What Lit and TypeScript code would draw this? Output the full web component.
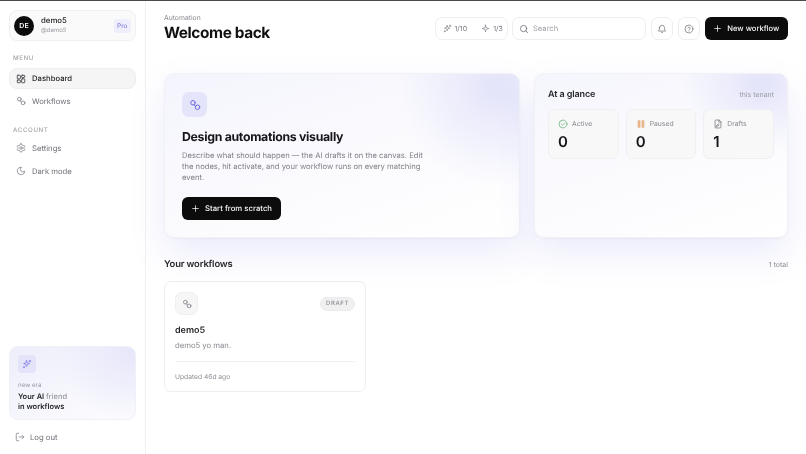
import { LitElement, html, css, svg } from "lit";
import { customElement } from "lit/decorators.js";

const ic = (body: unknown, size = 10, color = "currentColor", sw = 1.9) => html`<svg width=${size} height=${size} viewBox="0 0 24 24" fill="none" stroke=${color} stroke-width=${sw} stroke-linecap="round" stroke-linejoin="round">${body}</svg>`;

const route = svg`<circle cx="8" cy="7.5" r="4.5"/><circle cx="17" cy="16.5" r="4.5"/><path d="M10 11.5l3 3"/>`;
const grid = svg`<rect x="3" y="3" width="7.5" height="8.5" rx="1.5"/><rect x="13.5" y="3" width="7.5" height="5.5" rx="1.5"/><rect x="13.5" y="11.5" width="7.5" height="9.5" rx="1.5"/><rect x="3" y="14.5" width="7.5" height="6.5" rx="1.5"/>`;
const gear = svg`<path d="M12.22 2h-.44a2 2 0 0 0-2 2v.18a2 2 0 0 1-1 1.73l-.43.25a2 2 0 0 1-2 0l-.15-.08a2 2 0 0 0-2.73.73l-.22.38a2 2 0 0 0 .73 2.73l.15.1a2 2 0 0 1 1 1.72v.51a2 2 0 0 1-1 1.74l-.15.09a2 2 0 0 0-.73 2.73l.22.38a2 2 0 0 0 2.73.73l.15-.08a2 2 0 0 1 2 0l.43.25a2 2 0 0 1 1 1.73V20a2 2 0 0 0 2 2h.44a2 2 0 0 0 2-2v-.18a2 2 0 0 1 1-1.73l.43-.25a2 2 0 0 1 2 0l.15.08a2 2 0 0 0 2.73-.73l.22-.39a2 2 0 0 0-.73-2.73l-.15-.08a2 2 0 0 1-1-1.74v-.5a2 2 0 0 1 1-1.74l.15-.09a2 2 0 0 0 .73-2.73l-.22-.38a2 2 0 0 0-2.73-.73l-.15.08a2 2 0 0 1-2 0l-.43-.25a2 2 0 0 1-1-1.73V4a2 2 0 0 0-2-2z"/><circle cx="12" cy="12" r="3"/>`;
const moon = svg`<path d="M12 3a6 6 0 0 0 9 9 9 9 0 1 1-9-9Z"/>`;
const sparkle = svg`<path d="M11 4l1.8 5.2L18 11l-5.2 1.8L11 18l-1.8-5.2L4 11l5.2-1.8z"/><path d="M19 3v4M17 5h4M5 18v3M3.5 19.5h3"/>`;
const bolt = svg`<path d="M12 3l2 7 7 2-7 2-2 7-2-7-7-2 7-2z"/>`;
const logout = svg`<path d="M9 3H5a2 2 0 0 0-2 2v14a2 2 0 0 0 2 2h4"/><path d="M10 12h11M17 8l4 4-4 4"/>`;
const search = svg`<circle cx="11" cy="11" r="7.5"/><path d="M21 21l-4.5-4.5"/>`;
const bell = svg`<path d="M6 9a6 6 0 0 1 12 0c0 6 2.5 8 2.5 8h-17S6 15 6 9z"/><path d="M10.5 20.5a2 2 0 0 0 3 0"/>`;
const help = svg`<circle cx="12" cy="12" r="9.5"/><path d="M9.2 9.2a3 3 0 0 1 5.7 1c0 2-2.9 2.6-2.9 3.6"/><path d="M12 17.2h.01"/>`;
const plus = svg`<path d="M12 4.5v15M4.5 12h15"/>`;
const check = svg`<circle cx="12" cy="12" r="9.5"/><path d="M8 12.2l2.8 2.8L16 9.5"/>`;
const pause = svg`<rect x="4" y="3" width="6.6" height="18" rx="1.2" fill="#e8b48a" stroke="none"/><rect x="13.4" y="3" width="6.6" height="18" rx="1.2" fill="#e8b48a" stroke="none"/>`;
const draft = svg`<path d="M14 2.5H7a2 2 0 0 0-2 2v15a2 2 0 0 0 2 2h10a2 2 0 0 0 2-2V7.5z"/><path d="M14 2.5v5h5"/><path d="M8 18l1-3 4-3 2 2-4 3z"/>`;

@customElement("app-root")
export class AppRoot extends LitElement {
  static styles = css`
    :host { display: block; width: 806px; height: 454px; overflow: hidden; background: #fff; font-family: Inter, "Liberation Sans", sans-serif; color: #111113; text-rendering: geometricPrecision; will-change: transform; }
    * { box-sizing: border-box; }
    .shell { display: flex; height: 454px; border-top: 1px solid #4a4a4c; }
    .side { width: 146px; flex: none; border-right: 1px solid #f1f1f3; padding: 9px 9px 0; display: flex; flex-direction: column; }
    .user { height: 31px; border: 1px solid #f0f0f2; border-radius: 8px; background: #fafafa; display: flex; align-items: center; padding: 0 4px; gap: 7px; box-shadow: 0 1px 2px rgba(0,0,0,.02); }
    .avatar { width: 20px; height: 20px; border-radius: 50%; background: #0c0c0d; color: #fff; font-size: 7px; font-weight: 600; display: flex; align-items: center; justify-content: center; }
    .who { flex: 1; line-height: 1; }
    .who b { display: block; font-size: 7.8px; font-weight: 500; color: #26262a; margin-bottom: 3px; }
    .who span { display: block; font-size: 6px; color: #9a9aa2; }
    .pro { font-size: 6.5px; color: #8b86e0; background: #eeeefc; border-radius: 3px; padding: 3px 3.5px; font-weight: 500; }
    .label { font-size: 6.2px; letter-spacing: .6px; color: #a3a3aa; font-weight: 500; line-height: 8px; padding-left: 4px; }
    .label.m { margin-top: 14px; margin-bottom: 5px; }
    .label.a { margin-top: 13.5px; margin-bottom: 2.5px; }
    .nav { height: 22px; display: flex; align-items: center; gap: 6px; padding-left: 7px; font-size: 7.7px; color: #6f6f77; border-radius: 8px; margin-bottom: 1px; }
    .nav.on { height: 21px; background: #f5f5f6; border: 1px solid #eeeef0; color: #26262a; font-weight: 500; padding-left: 6px; }
    .spacer { flex: 1; }
    .promo { height: 74px; border: 1px solid #f0f0f7; border-radius: 9px; padding: 8px; background: radial-gradient(circle at 100% 0, #e6e6fa 0, rgba(230,230,250,0) 55%), linear-gradient(150deg,#eeeefb 0,#f7f7fd 60%,#fdfdff 100%); }
    .promo-ic { width: 18px; height: 18px; border-radius: 4px; background: #e3e3fa; display: flex; align-items: center; justify-content: center; color: #6d6ae0; margin-bottom: 9px; }
    .era { font-size: 6.2px; color: #9a9aa2; line-height: 8px; margin-bottom: 2px; }
    .promo p { margin: 0; font-size: 7.5px; line-height: 10px; font-weight: 600; color: #26262a; }
    .promo p i { font-style: normal; font-weight: 400; color: #88888f; }
    .logout { height: 34px; display: flex; align-items: center; gap: 5px; padding-left: 6px; font-size: 7.7px; color: #6f6f77; }
    .main { flex: 1; padding: 10px 18px 0 18px; min-width: 0; background: #fff; position: relative; }
    .top { display: flex; align-items: flex-start; height: 36px; }
    .crumb { font-size: 6.8px; color: #8a8a92; line-height: 9px; margin-top: 2px; }
    h1 { margin: 0; font-size: 15.4px; line-height: 20px; font-weight: 700; letter-spacing: -.4px; margin-top: 1px; color: #111113; }
    .tools { margin-left: auto; display: flex; align-items: center; gap: 4.5px; margin-top: 6px; }
    .usage { width: 73px; height: 23px; border: 1px solid #f0f0f2; border-radius: 7px; display: flex; align-items: center; font-size: 7px; color: #77777f; padding: 0 7px; }
    .usage span { display: inline-flex; align-items: center; gap: 3px; }
    .usage em { width: 1px; height: 7px; background: #eeeeef; margin: 0 7px; }
    .search { width: 134px; height: 23px; border: 1px solid #eeeef0; border-radius: 7px; display: flex; align-items: center; gap: 4px; padding-left: 6px; font-size: 7.6px; color: #a3a3aa; }
    .square { width: 22.5px; height: 23px; border: 1px solid #eeeef0; border-radius: 7px; display: flex; align-items: center; justify-content: center; color: #66666e; }
    .primary { background: #0c0c0d; color: #f5f5f5; border-radius: 6px; display: inline-flex; align-items: center; justify-content: center; gap: 5px; font-weight: 500; }
    .new { width: 83.5px; height: 23px; font-size: 7.6px; }
    .cards { display: flex; gap: 14px; margin-top: 26px; }
    .card { height: 165px; border: 1px solid #f1f1f6; border-radius: 10px; box-shadow: 0 16px 36px rgba(110,110,230,.14), 0 1px 2px rgba(0,0,0,.03); }
    .hero { width: 356px; padding: 18px 17px; background: radial-gradient(ellipse 100px 100px at 94% 8%, #e3e3fa 0, rgba(228,228,250,.55) 45%, rgba(228,228,250,0) 100%), linear-gradient(160deg,#f4f4fd 0,#fbfbfe 55%,#fff 100%); }
    .hero-ic { width: 25px; height: 25px; border-radius: 7px; background: #e4e4fa; display: flex; align-items: center; justify-content: center; color: #6d6ae0; }
    h2 { margin: 11px 0 0; font-size: 12.3px; line-height: 17px; font-weight: 700; letter-spacing: -.3px; color: #16161a; }
    .hero p { margin: 5px 0 0; width: 245px; font-size: 7.65px; line-height: 11.2px; color: #7f7f87; }
    .start { width: 99px; height: 23px; font-size: 7.75px; margin-top: 13px; }
    .glance { flex: 1; padding: 13px; background: radial-gradient(ellipse 80px 70px at 90% 6%, #e3e3fa 0, rgba(228,228,250,.55) 45%, rgba(228,228,250,0) 100%), linear-gradient(160deg,#f5f5fd 0,#fbfbfe 55%,#fff 100%); }
    .g-head { display: flex; justify-content: space-between; align-items: center; height: 14px; margin-bottom: 8px; }
    .g-head b { font-size: 9px; font-weight: 600; color: #26262a; letter-spacing: -.1px; }
    .g-head span { font-size: 7px; color: #9a9aa2; }
    .stats { display: flex; gap: 7px; }
    .stat { flex: 1; height: 50px; border: 1px solid #f0f0f3; border-radius: 7px; background: #f8f8f9; padding: 8.5px 9px; }
    .stat div { display: flex; align-items: center; gap: 4px; font-size: 6.8px; color: #88888f; line-height: 9px; height: 10px; }
    .stat strong { display: block; margin-top: 4.5px; font-size: 15px; line-height: 18px; font-weight: 600; color: #16161a; }
    .wf-head { display: flex; justify-content: space-between; align-items: center; margin-top: 19px; height: 14px; }
    .wf-head b { font-size: 9.4px; font-weight: 600; letter-spacing: -.15px; color: #26262a; }
    .wf-head span { font-size: 7px; color: #88888f; }
    .wf { width: 202px; height: 111px; border: 1px solid #efeff1; border-radius: 7px; margin-top: 10px; padding: 10px 10px 0; background: #fff; }
    .wf-top { display: flex; justify-content: space-between; align-items: center; }
    .wf-ic { width: 23px; height: 23px; background: #f6f6f7; border: 1px solid #efeff1; border-radius: 7px; display: flex; align-items: center; justify-content: center; color: #77777f; }
    .badge { font-size: 6px; letter-spacing: .6px; color: #88888f; background: #f0f0f1; border-radius: 7px; padding: 2.5px 5px; font-weight: 500; line-height: 7px; border: 1px solid #ebebed; }
    .wf h3 { margin: 10px 0 0; font-size: 9px; line-height: 12px; font-weight: 600; color: #26262a; }
    .wf p { margin: 2.5px 0 0; font-size: 7.7px; line-height: 11px; color: #88888f; }
    .rule { height: 1px; background: #f1f1f2; margin: 10.5px 0 10.5px; }
    .upd { font-size: 6.7px; color: #8e8e96; line-height: 9px; }
  `;

  render() {
    return html`<div class="shell">
      <aside class="side">
        <div class="user">
          <div class="avatar">DE</div>
          <div class="who"><b>demo5</b><span>@demo5</span></div>
          <div class="pro">Pro</div>
        </div>
        <div class="label m">MENU</div>
        <div class="nav on">${ic(grid, 10, "#3a3a40", 2)}Dashboard</div>
        <div class="nav">${ic(route, 10, "#77777f", 1.8)}Workflows</div>
        <div class="label a">ACCOUNT</div>
        <div class="nav">${ic(gear, 10, "#77777f", 1.7)}Settings</div>
        <div class="nav">${ic(moon, 10, "#77777f", 1.7)}Dark mode</div>
        <div class="spacer"></div>
        <div class="promo">
          <div class="promo-ic">${ic(sparkle, 10, "#6d6ae0", 1.6)}</div>
          <div class="era">new era</div>
          <p>Your AI <i>friend</i></p>
          <p>in workflows</p>
        </div>
        <div class="logout">${ic(logout, 10, "#77777f", 1.7)}Log out</div>
      </aside>
      <main class="main">
        <div class="top">
          <div>
            <div class="crumb">Automation</div>
            <h1>Welcome back</h1>
          </div>
          <div class="tools">
            <div class="usage">
              <span>${ic(sparkle, 9, "#77777f", 1.7)}1/10</span><em></em><span>${ic(bolt, 9, "#77777f", 1.7)}1/3</span>
            </div>
            <div class="search">${ic(search, 10, "#66666e", 1.8)}Search</div>
            <div class="square">${ic(bell, 10, "#66666e", 1.6)}</div>
            <div class="square">${ic(help, 10, "#66666e", 1.6)}</div>
            <div class="primary new">${ic(plus, 9, "#f5f5f5", 2)}New workflow</div>
          </div>
        </div>
        <div class="cards">
          <section class="card hero">
            <div class="hero-ic">${ic(route, 12, "#6d6ae0", 2)}</div>
            <h2>Design automations visually</h2>
            <p>Describe what should happen — the AI drafts it on the canvas. Edit the nodes, hit activate, and your workflow runs on every matching event.</p>
            <div class="primary start">${ic(plus, 9, "#f5f5f5", 2)}Start from scratch</div>
          </section>
          <section class="card glance">
            <div class="g-head"><b>At a glance</b><span>this tenant</span></div>
            <div class="stats">
              <div class="stat"><div>${ic(check, 10, "#5fae6e", 1.7)}Active</div><strong>0</strong></div>
              <div class="stat"><div>${ic(pause, 10, "#e2a66e", 1.2)}Paused</div><strong>0</strong></div>
              <div class="stat"><div>${ic(draft, 10, "#66666e", 1.6)}Drafts</div><strong>1</strong></div>
            </div>
          </section>
        </div>
        <div class="wf-head"><b>Your workflows</b><span>1 total</span></div>
        <section class="wf">
          <div class="wf-top">
            <div class="wf-ic">${ic(route, 10, "#77777f", 1.8)}</div>
            <div class="badge">DRAFT</div>
          </div>
          <h3>demo5</h3>
          <p>demo5 yo man.</p>
          <div class="rule"></div>
          <div class="upd">Updated 46d ago</div>
        </section>
      </main>
    </div>`;
  }
}
